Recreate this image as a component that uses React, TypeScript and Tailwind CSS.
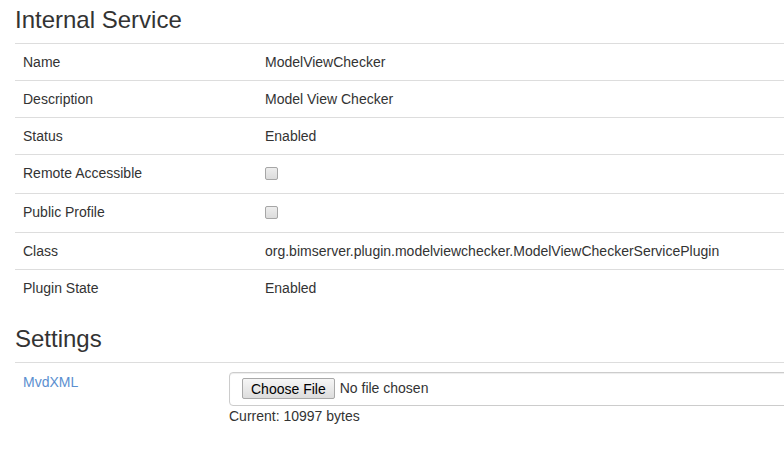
export default function App() {
  const rows: { label: string; value?: string; checkbox?: boolean }[] = [
    { label: "Name", value: "ModelViewChecker" },
    { label: "Description", value: "Model View Checker" },
    { label: "Status", value: "Enabled" },
    { label: "Remote Accessible", checkbox: true },
    { label: "Public Profile", checkbox: true },
    { label: "Class", value: "org.bimserver.plugin.modelviewchecker.ModelViewCheckerServicePlugin" },
    { label: "Plugin State", value: "Enabled" },
  ];

  return (
    <div className="w-[784px] h-[450px] overflow-hidden bg-white text-[#333] text-[14px] leading-[20px] font-['Liberation_Sans',Arial,sans-serif]">
      <div className="w-[1140px] pl-[15px]">
        {/* Internal Service */}
        <h3 className="text-[24px] leading-[26px] font-normal mt-[7px] mb-[10px]">Internal Service</h3>
        <table className="w-full table-fixed border-collapse">
          <colgroup>
            <col className="w-[242px]" />
            <col />
          </colgroup>
          <tbody>
            {rows.map((r) => (
              <tr key={r.label} className="border-t border-[#ddd]">
                <td className="p-[8px] align-top">{r.label}</td>
                <td className="p-[8px] align-top">
                  {r.checkbox ? (
                    <div className="h-[22px] pt-[4px]">
                      <span className="block w-[13px] h-[13px] rounded-[2px] border border-[#a6a6a6] bg-gradient-to-b from-[#ededed] to-[#dcdcdc]" />
                    </div>
                  ) : (
                    r.value
                  )}
                </td>
              </tr>
            ))}
          </tbody>
        </table>

        {/* Settings */}
        <h3 className="text-[24px] leading-[26px] font-normal mt-[20px] mb-[10px]">Settings</h3>
        <table className="w-full table-fixed border-collapse">
          <colgroup>
            <col className="w-[206px]" />
            <col />
          </colgroup>
          <tbody>
            <tr className="border-t border-[#ddd]">
              <td className="px-[8px] pt-[9px] align-top text-[#5b8fd0]">MvdXML</td>
              <td className="px-[8px] pt-[9px] align-top">
                <div className="h-[34px] border border-[#ccc] rounded-[4px] shadow-[inset_0_1px_1px_rgba(0,0,0,0.075)] px-[12px] pt-[5px] flex items-start gap-[5px]">
                  <span className="h-[21px] px-[8px] flex items-center border border-[#a9a9a9] rounded-[2px] bg-gradient-to-b from-[#f6f6f6] to-[#dddddd] text-[14px] text-black">
                    Choose File
                  </span>
                  <span className="leading-[21px] text-[#333]">No file chosen</span>
                </div>
                <div>Current: 10997 bytes</div>
              </td>
            </tr>
          </tbody>
        </table>
      </div>
    </div>
  );
}
